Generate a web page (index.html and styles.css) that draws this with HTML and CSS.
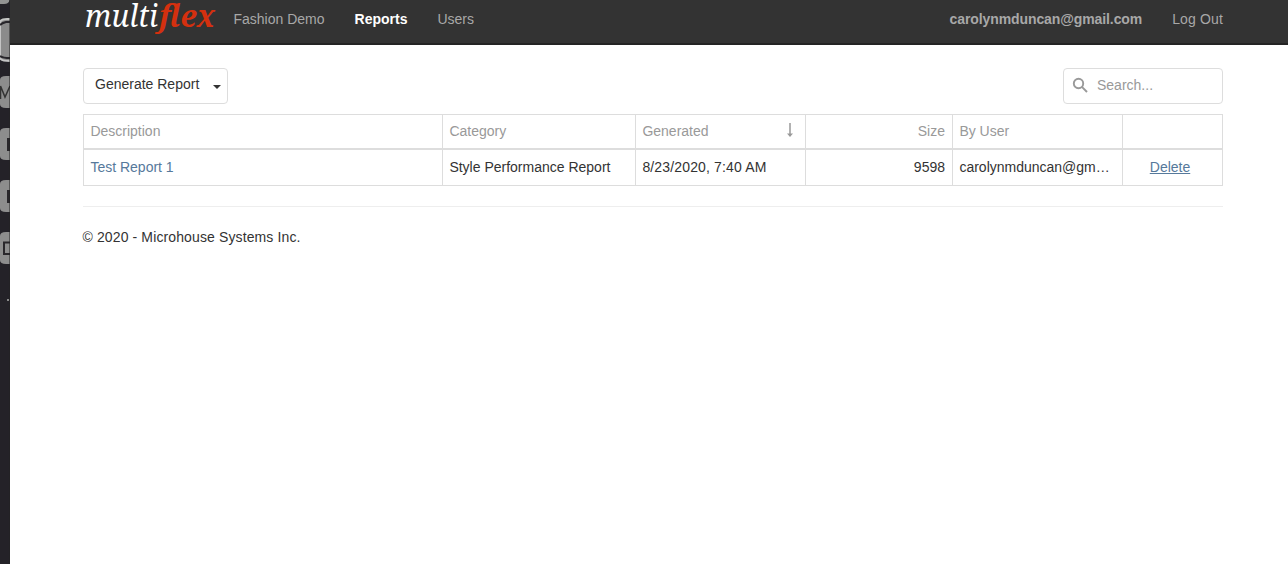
FILE: index.html
```html
<!DOCTYPE html>
<html lang="en">
<head>
<meta charset="utf-8">
<title>Reports - Multiflex</title>
<link rel="stylesheet" href="styles.css">
</head>
<body>
<svg class="dock" width="10" height="564" viewBox="0 0 10 564" aria-hidden="true">
  <rect width="10" height="564" fill="#242228"/>
  <path d="M0 0H9.500Q9 4 4 4H0Z" fill="#929292"/>
  <path d="M10 19H7Q0 19 0 23V58Q1 61 10 61" fill="#8b8b8b" stroke="#c4c4c4" stroke-width="2"/>
  <path d="M10 22H6Q2 23 0 25M0 56Q3 58 10 58" fill="none" stroke="#28262b" stroke-width="2"/>
  <g fill="#8d8d8d">
    <path d="M10 76H6Q0 76 0 80V104Q0 108 6 108H10Z"/>
    <path d="M10 128H6Q0 128 0 132V156Q0 160 6 160H10Z"/>
    <path d="M10 180H6Q0 180 0 184V208Q0 212 6 212H10Z"/>
    <path d="M10 232H6Q0 232 0 236V260Q0 264 6 264H10Z"/>
  </g>
  <path d="M.5 99V86L5 97L10 86" fill="none" stroke="#333" stroke-width="1.500"/>
  <path d="M10 138H7V151H10ZM10 190H7V203H10Z" fill="#29272b"/>
  <path d="M10 242.500H4V254H10" fill="none" stroke="#29272b" stroke-width="2"/>
  <rect x="7" y="299" width="2" height="2" fill="#8a8a8a"/>
  <rect x="9" width="1" height="564" fill="#222" opacity=".5"/>
</svg>
<div class="page">
  <header class="navbar">
    <svg class="logo" width="134" height="36" viewBox="0 0 134 36" role="img" aria-label="multiflex">
      <text class="logo-multi" x="2" y="27" textLength="73" lengthAdjust="spacingAndGlyphs">multi</text>
      <text class="logo-flex" x="76" y="27" textLength="56" lengthAdjust="spacingAndGlyphs">flex</text>
    </svg>
    <nav class="links">
      <a>Fashion Demo</a>
      <a class="active">Reports</a>
      <a>Users</a>
    </nav>
    <nav class="links account">
      <a class="email">carolynmduncan@gmail.com</a>
      <a>Log Out</a>
    </nav>
  </header>
  <main class="content">
    <div class="toolbar">
      <button class="generate">Generate Report<svg width="8" height="4" viewBox="0 0 8 4"><path d="M0 0H8L4 4Z" fill="#333"/></svg></button>
      <label class="search">
        <svg width="16" height="16" viewBox="0 0 16 16" fill="none" stroke="#999" stroke-width="1.900"><circle cx="6.500" cy="6.500" r="4.700"/><path d="M9.900 9.900L15 15"/></svg>
        <span>Search...</span>
      </label>
    </div>
    <table class="grid">
      <colgroup><col class="c-desc"><col class="c-cat"><col class="c-gen"><col class="c-size"><col class="c-user"><col class="c-act"></colgroup>
      <thead>
        <tr><th>Description</th><th>Category</th><th><div class="sorted">Generated<svg width="6" height="14" viewBox="0 0 6 14"><path d="M3 0V11" stroke="#999" stroke-width="1.500"/><path d="M0 10.500H6L3 14Z" fill="#999"/></svg></div></th><th class="num">Size</th><th>By User</th><th></th></tr>
      </thead>
      <tbody>
        <tr><td><a class="link">Test Report 1</a></td><td>Style Performance Report</td><td class="date">8/23/2020, 7:40 AM</td><td class="num">9598</td><td class="user">carolynmduncan@gm…</td><td class="action"><a class="link">Delete</a></td></tr>
      </tbody>
    </table>
    <footer class="footer">© 2020 - Microhouse Systems Inc.</footer>
  </main>
</div>
</body>
</html>
```
FILE: styles.css
```css
* { box-sizing: border-box; }
body {
  margin: 0;
  height: 564px;
  display: flex;
  overflow: hidden;
  background: #fff;
  color: #333;
  font: 14px/20px "Liberation Sans", Arial, sans-serif;
}
.dock { flex: none; display: block; }
.page { flex: 1; min-width: 0; }
.navbar {
  display: flex;
  height: 45px;
  padding: 0 65px 0 73px;
  background: #333;
  border-bottom: 2px solid #242424;
}
.logo { flex: none; overflow: visible; }
.logo-multi, .logo-flex { font: italic 30px "Noto Serif", "DejaVu Serif", serif; fill: #fff; }
.logo-flex { font-weight: bold; fill: #d4300f; }
.links { display: flex; gap: 30px; padding: 9px 0 0 16.5px; color: #a8a8a8; }
.account { margin-left: auto; letter-spacing: 0.15px; }
.active { color: #fff; font-weight: bold; }
.email { font-weight: bold; letter-spacing: -0.1px; }
.content { padding: 23px 65px 0 72px; }
.toolbar { display: flex; justify-content: space-between; padding-left: 1px; }
.generate {
  display: flex;
  justify-content: space-between;
  align-items: center;
  width: 145px;
  height: 36px;
  padding: 0 6px 4px 11px;
  border: 1px solid #ddd;
  border-radius: 4px;
  background: #fff;
  color: #333;
  font: inherit;
}
.generate svg { margin-top: 5px; }
.search {
  display: flex;
  align-items: center;
  gap: 9px;
  width: 160px;
  height: 36px;
  padding: 0 8px 2px;
  border: 1px solid #ddd;
  border-radius: 4px;
  color: #999;
}
.grid {
  width: 1140px;
  margin: 10px 0 0 1px;
  table-layout: fixed;
  border-collapse: separate;
  border-spacing: 0;
  border-top: 1px solid #ddd;
  border-left: 1px solid #ddd;
}
.c-desc { width: 359px; }
.c-cat { width: 193px; }
.c-gen { width: 170px; }
.c-size { width: 147px; }
.c-user { width: 170px; }
.c-act { width: 100px; }
.grid th, .grid td {
  height: 36px;
  padding: 0 7px 2px 6.4px;
  border-right: 1px solid #ddd;
  border-bottom: 1px solid #ddd;
  text-align: left;
  font-weight: normal;
  white-space: nowrap;
}
.grid th { height: 35px; padding-bottom: 1px; border-bottom-width: 2px; color: #999; }
.grid .num { text-align: right; }
.grid .action { text-align: center; padding: 0 10px 2px 5px; text-decoration: underline; color: #56799b; }
.date { letter-spacing: 0.15px; }
.sorted { display: flex; justify-content: space-between; padding-right: 5px; }
.sorted svg { margin-top: 2px; }
.link { color: #56799b; }
.footer { margin: 20px 0 0 0.5px; padding-top: 20px; border-top: 1px solid #eee; letter-spacing: 0.12px; }
```
